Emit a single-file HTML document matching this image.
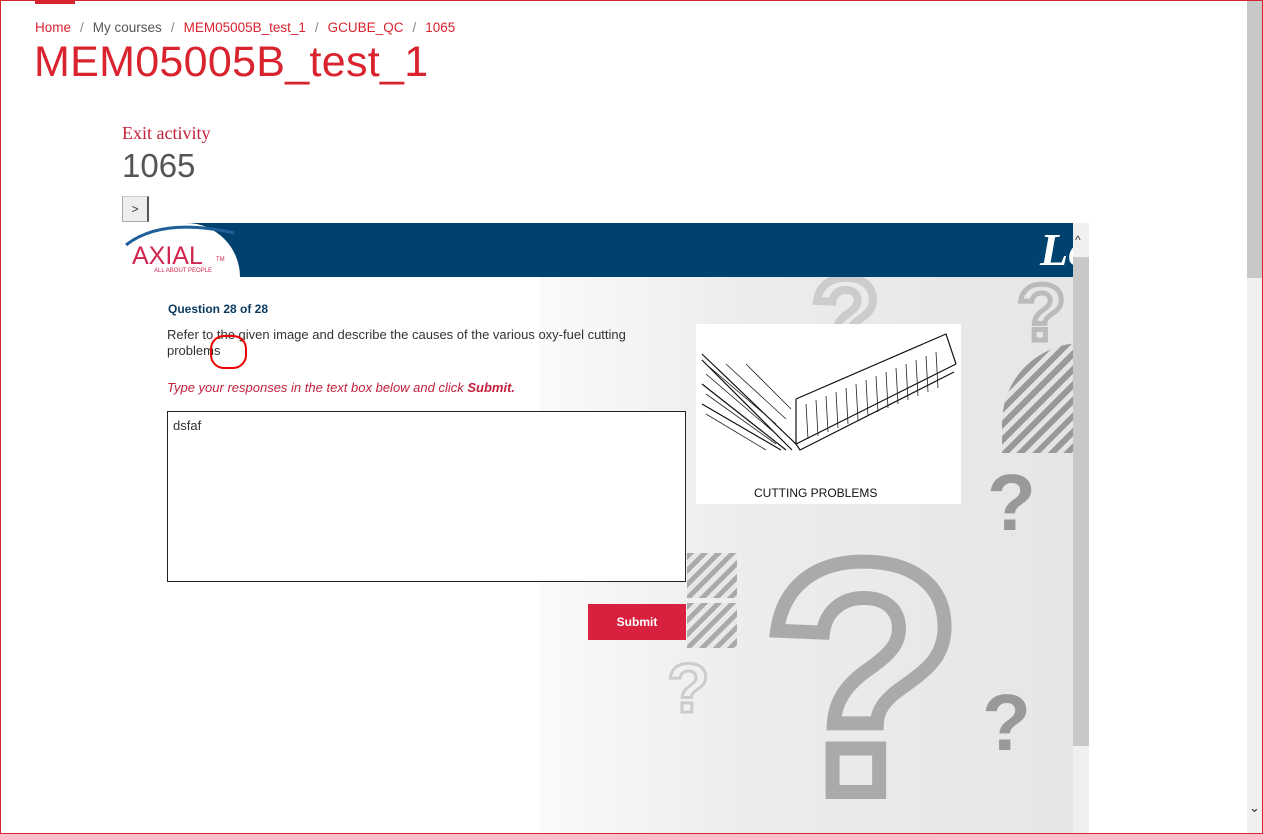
<!DOCTYPE html>
<html><head><style>
*{margin:0;padding:0;box-sizing:border-box}
html,body{width:1263px;height:834px;overflow:hidden}
body{background:#fff;font-family:"Liberation Sans",sans-serif;position:relative}
.frame{position:absolute;left:0;top:0;width:1263px;height:834px;border:1px solid #d9232e;pointer-events:none;z-index:10}
.tab{position:absolute;left:35px;top:0;width:40px;height:4px;background:#d9232e}
.bc{position:absolute;left:35px;top:20px;font-size:13.5px;color:#d9232e}
.bc span.s{color:#888;margin:0 9px}
.bc .g{color:#555}
h1{position:absolute;left:34px;top:38px;font-size:43px;font-weight:normal;color:#d9232e;letter-spacing:0.3px}
.exit{position:absolute;left:122px;top:123px;font-family:"Liberation Serif",serif;font-size:18px;color:#c4203b}
.num{position:absolute;left:122px;top:147px;font-size:33px;color:#555}
.btn{position:absolute;left:122px;top:196px;width:27px;height:26px;background:#eee;border:1px solid #aaa;border-right:2px solid #555;border-top:1px solid #ccc;font-size:12px;text-align:center;line-height:24px;color:#333}
.ifr{position:absolute;left:122px;top:223px;width:967px;height:611px;overflow:hidden}
.hdr{position:absolute;left:0;top:0;width:951px;height:54px;background:#00426f}
.logo{position:absolute;left:0;top:0;width:118px;height:54px;background:#fff;border-radius:0 60px 0 0}
.bg{position:absolute;left:418px;top:54px;width:533px;height:557px;background:linear-gradient(90deg,#fafafa,#ececec 40%,#e6e6e6)}
.q{position:absolute;font-weight:bold;font-family:"Liberation Sans",sans-serif;line-height:1;color:transparent;-webkit-text-stroke:10px #aaa}
.sb{position:absolute;left:951px;top:0;width:16px;height:611px;background:#f0f0f0}
.sbt{position:absolute;left:951px;top:34px;width:16px;height:489px;background:#c8c8c8}
.msb{position:absolute;left:1247px;top:0;width:15px;height:834px;background:#f0f0f0}
.msbt{position:absolute;left:1247px;top:0;width:15px;height:278px;background:#c8c8c8}
</style></head><body>
<div class="tab"></div>
<div class="bc">Home<span class="s">/</span><span class="g">My courses</span><span class="s">/</span>MEM05005B_test_1<span class="s">/</span>GCUBE_QC<span class="s">/</span>1065</div>
<h1>MEM05005B_test_1</h1>
<div class="exit">Exit activity</div>
<div class="num">1065</div>
<div class="btn">&gt;</div>
<div class="ifr">
 <div class="bg"></div>
 <div class="q" style="left:640px;top:290px;font-size:330px;-webkit-text-stroke:14px #aaa">?</div>
 <div class="q" style="left:690px;top:40px;font-size:110px;-webkit-text-stroke:8px #ccc">?</div>
 <div class="q" style="left:865px;top:240px;font-size:80px;color:#999;-webkit-text-stroke:0">?</div>
 <div class="q" style="left:860px;top:460px;font-size:80px;color:#999;-webkit-text-stroke:0">?</div>
 <div class="q" style="left:895px;top:50px;font-size:80px;-webkit-text-stroke:5px #bbb">?</div>
 <div class="q" style="left:545px;top:430px;font-size:70px;-webkit-text-stroke:3px #ccc">?</div>
 <div style="position:absolute;left:880px;top:120px;width:80px;height:110px;background:repeating-linear-gradient(135deg,#999 0 6px,#e4e4e4 6px 11px);border-radius:80px 0 0 0"></div>
 <div style="position:absolute;left:565px;top:330px;width:50px;height:45px;background:repeating-linear-gradient(135deg,#aaa 0 5px,#e8e8e8 5px 10px)"></div>
 <div style="position:absolute;left:565px;top:380px;width:50px;height:45px;background:repeating-linear-gradient(135deg,#aaa 0 5px,#e8e8e8 5px 10px)"></div>
 <div class="hdr"></div>
 <div class="logo"><svg width="118" height="54"><path d="M4 22 Q40 -6 112 10" stroke="#1f5f99" stroke-width="3" fill="none"/><text x="10" y="41" font-family="Liberation Sans" font-size="25" fill="#d0254f">AXIAL</text><text x="94" y="38" font-size="6" fill="#d0254f" font-family="Liberation Sans">TM</text><text x="32" y="49" font-size="6" fill="#d0254f" font-family="Liberation Sans">ALL ABOUT PEOPLE</text></svg></div>
 <div style="position:absolute;left:918px;top:0;font-family:'Liberation Serif',serif;font-style:italic;font-weight:bold;font-size:46px;color:#fff;line-height:54px">Le</div>
 <div style="position:absolute;left:46px;top:79px;font-size:12px;font-weight:bold;color:#0b3a5e">Question 28 of 28</div>
 <div style="position:absolute;left:45px;top:104px;width:510px;font-size:13px;line-height:16px;color:#333">Refer to the given image and describe the causes of the various oxy-fuel cutting problems</div>
 <div style="position:absolute;left:88px;top:112px;width:37px;height:34px;border:2px solid #e00;border-radius:14px"></div>
 <div style="position:absolute;left:45px;top:157px;font-size:13px;font-style:italic;color:#c4203b">Type your responses in the text box below and click <b>Submit.</b></div>
 <div style="position:absolute;left:45px;top:188px;width:519px;height:171px;background:#fff;border:1px solid #222;font-size:13px;color:#333;padding:6px 5px">dsfaf</div>
 <div style="position:absolute;left:466px;top:381px;width:98px;height:36px;background:#d9203e;color:#fff;font-size:12px;font-weight:bold;text-align:center;line-height:36px">Submit</div>
 <div style="position:absolute;left:574px;top:101px;width:265px;height:180px;background:#fff">
  <svg width="265" height="180"><g stroke="#111" fill="none" stroke-width="1.2">
   <path d="M6 30 L100 120 L260 40"/><path d="M6 36 L96 126"/><path d="M100 120 L104 126 L258 48"/>
   <path d="M6 60 L90 126"/><path d="M6 80 L85 126"/><path d="M100 75 L250 10 L260 40"/>
   <path d="M100 75 L100 120"/></g>
   <g stroke="#222" stroke-width="0.8">
   <path d="M10 40 L80 100 M10 50 L80 110 M10 70 L80 120 M10 90 L70 126 M30 40 L90 95 M50 40 L95 85"/>
   <path d="M110 80 L112 115 M120 76 L122 112 M130 72 L132 108 M140 68 L142 104 M150 64 L152 100 M160 60 L162 96 M170 56 L172 92 M180 52 L182 88 M190 48 L192 84 M200 44 L202 80 M210 40 L212 76 M220 36 L222 72 M230 32 L232 68 M240 28 L242 64"/></g>
   <text x="58" y="173" font-family="Liberation Sans" font-size="12" fill="#111">CUTTING PROBLEMS</text></svg>
 </div>
 <div class="sb"></div><div class="sbt"></div>
 <div style="position:absolute;left:953px;top:10px;font-size:12px;color:#333">^</div>
</div>
<div class="msb"></div><div class="msbt"></div>
<div style="position:absolute;left:1249px;top:800px;font-size:13px;color:#333">&#8964;</div>
<div class="frame"></div>
</body></html>
